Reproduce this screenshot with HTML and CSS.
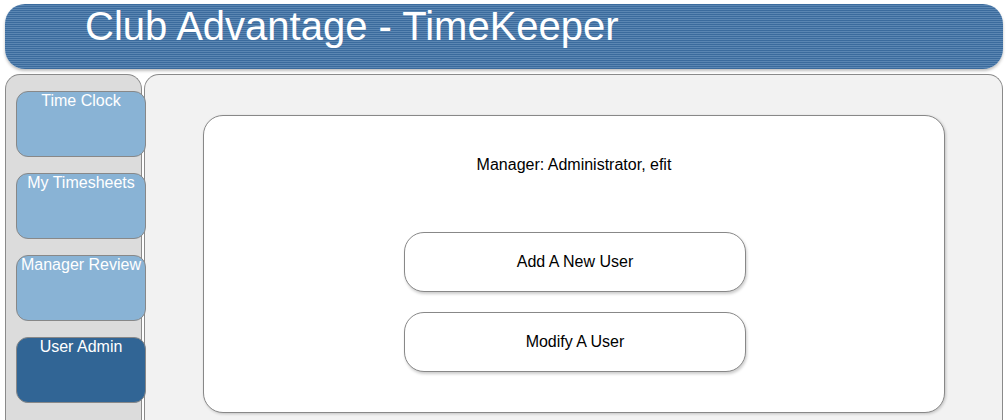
FILE: index.html
```html
<!DOCTYPE html>
<html lang="en">
<head>
  <meta charset="UTF-8">
  <title>Club Advantage - TimeKeeper</title>
  <link rel="stylesheet" href="styles.css">
</head>
<body>
  <div class="header">
    <h1>Club Advantage - TimeKeeper</h1>
  </div>
  <div class="page">
    <div class="sidebar">
      <a class="nav-btn" href="#">Time Clock</a>
      <a class="nav-btn" href="#">My Timesheets</a>
      <a class="nav-btn" href="#">Manager Review</a>
      <a class="nav-btn active" href="#">User Admin</a>
    </div>
    <div class="main">
      <div class="card">
        <p class="manager">Manager: Administrator, efit</p>
        <div class="actions">
          <button class="action-btn">Add A New User</button>
          <button class="action-btn">Modify A User</button>
        </div>
      </div>
    </div>
  </div>
</body>
</html>
```

FILE: styles.css
```css
body {
  margin: 0;
  padding: 4px 4px 0 5px;
  font-family: 'Liberation Sans', Arial, sans-serif;
  background-color: white;
  height: 420px;
  box-sizing: border-box;
  overflow: hidden;
}

.header {
  height: 65px;
  border-radius: 20px;
  background: repeating-linear-gradient(to bottom, #3b6b9d 0px, #3b6b9d 1px, #5b86b2 1px, #5b86b2 2px);
  box-shadow: 0 2px 3px rgba(0, 0, 0, 0.25);
}

.header h1 {
  margin: 0;
  padding: 0 0 0 80px;
  font-size: 40px;
  font-weight: normal;
  color: white;
  line-height: 44px;
}

.page {
  display: flex;
  gap: 2px;
  margin-top: 5px;
  height: 360px;
}

/* left menu */
.sidebar {
  width: 137px;
  flex-shrink: 0;
  background-color: #dcdcdc;
  border: 1px solid #8a8a8a;
  border-bottom: none;
  border-radius: 15px 15px 0 0;
  padding: 16px 0 0 10px;
  box-sizing: border-box;
}

.nav-btn {
  display: block;
  width: 130px;
  height: 66px;
  box-sizing: border-box;
  margin-bottom: 16px;
  background-color: #89b3d5;
  border: 1px solid #888;
  border-radius: 12px;
  color: white;
  text-decoration: none;
  text-align: center;
  font-size: 16px;
  line-height: 18px;
  position: relative;
  z-index: 1;
}

.nav-btn.active {
  background-color: #316595;
}

.main {
  flex: 1;
  background-color: #f2f2f2;
  border: 1px solid #8a8a8a;
  border-bottom: none;
  border-radius: 15px 15px 0 0;
  padding: 40px 57px 0 58px;
}

.card {
  background-color: white;
  border: 1px solid #888;
  border-radius: 20px;
  height: 298px;
  box-sizing: border-box;
  box-shadow: 1px 1px 3px rgba(0, 0, 0, 0.2);
  text-align: center;
}

.manager {
  margin: 0;
  padding-top: 39px;
  font-size: 16px;
  line-height: 20px;
  color: black;
}

.actions {
  display: flex;
  flex-direction: column;
  align-items: center;
  gap: 20px;
  margin-top: 57px;
  padding-left: 2px;
}

.action-btn {
  width: 342px;
  height: 60px;
  background-color: white;
  border: 1px solid #888;
  border-radius: 20px;
  box-shadow: 1px 2px 3px rgba(0, 0, 0, 0.2);
  font-family: 'Liberation Sans', Arial, sans-serif;
  font-size: 16px;
  color: black;
  cursor: pointer;
}
```
